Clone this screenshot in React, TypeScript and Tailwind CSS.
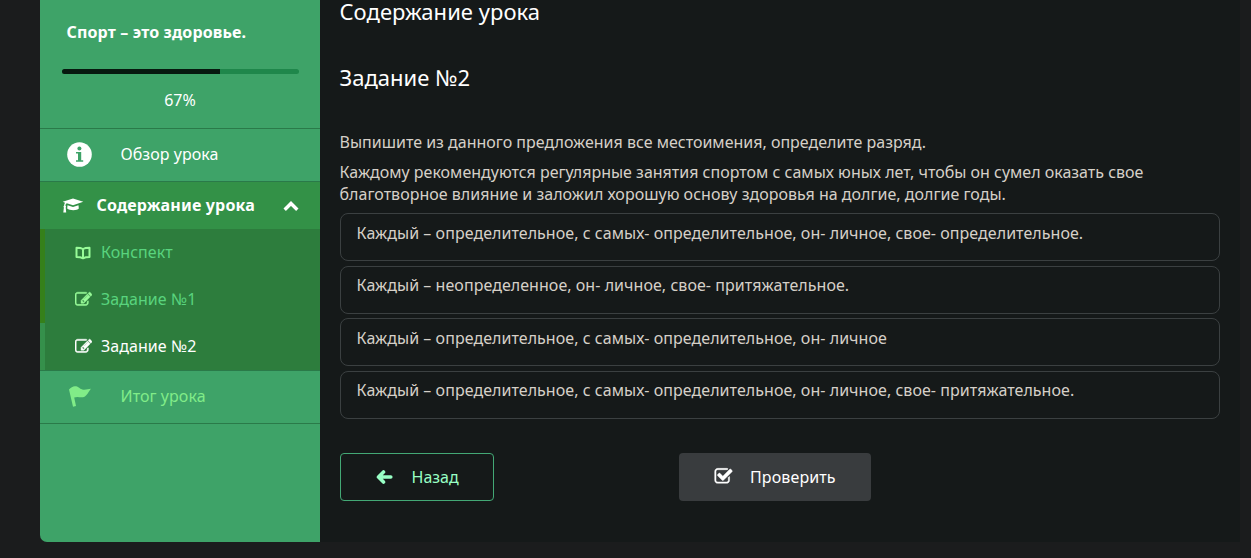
import { useState } from 'react';
import type { ReactNode } from 'react';

const answers = [
  'Каждый – определительное, с самых- определительное, он- личное, свое- определительное.',
  'Каждый – неопределенное, он- личное, свое- притяжательное.',
  'Каждый – определительное, с самых- определительное, он- личное',
  'Каждый – определительное, с самых- определительное, он- личное, свое- притяжательное.',
];

function InfoIcon() {
  return (
    <svg viewBox="0 0 25 25" className="w-[25px] h-[25px]">
      <circle cx="12.5" cy="12.5" r="12.3" fill="currentColor" />
      <circle cx="12.4" cy="6.500" r="2" fill="#3ea368" />
      <path d="M9 10H14.200V18.200H16.200V19.800H9V18.200H11V11.600H9Z" fill="#3ea368" />
    </svg>
  );
}

function CapIcon() {
  return (
    <svg viewBox="0 0 22 17" fill="currentColor" className="w-[22px] h-[17px]">
      <path d="M11 1.500L21.300 4.800L11 8.300L4.800 6.200C3.800 6.800 3.500 7.700 3.500 8.800C4.200 9.300 4.200 10 3.700 10.500L4.200 15.500H1.300L1.900 10.500C1.400 10 1.400 9.200 2.100 8.800C2.100 7.600 2.400 6.500 3 5.700L0.700 4.800Z" />
      <path d="M5.500 8.200L11 10L16.500 8.200L16.800 11.500C15.500 13.700 7.500 13.800 5.200 11.500Z" />
    </svg>
  );
}

function ChevronIcon() {
  return (
    <svg viewBox="0 0 16 12" fill="none" stroke="currentColor" strokeWidth="3.4" className="w-4 h-3">
      <path d="M1.700 9.800L8 3.500L14.300 9.800" />
    </svg>
  );
}

function EditIcon() {
  return (
    <svg viewBox="0 0 1792 1792" fill="currentColor" stroke="currentColor" strokeWidth="50" className="w-[17px] h-[17px]">
      <path d="M888 1184l116-116-152-152-116 116v56h96v96h56zm440-720q-16-16-33 1l-350 350q-17 17-1 33t33-1l350-350q17-17 1-33zm80 594v190q0 119-84.5 203.5t-203.5 84.5h-832q-119 0-203.5-84.5t-84.5-203.5v-832q0-119 84.5-203.5t203.5-84.5h832q63 0 117 25 15 7 18 23 3 17-9 29l-49 49q-14 14-32 8-23-6-45-6h-832q-66 0-113 47t-47 113v832q0 66 47 113t113 47h832q66 0 113-47t47-113v-126q0-13 9-22l64-64q15-15 35-7t20 29zm-96-738l288 288-672 672h-288v-288zm444 132l-92 92-288-288 92-92q28-28 68-28t68 28l152 152q28 28 28 68t-28 68z" />
    </svg>
  );
}

function CheckIcon() {
  return (
    <svg viewBox="0 0 1792 1792" fill="currentColor" stroke="currentColor" strokeWidth="40" className="w-[19px] h-[19px]">
      <path d="M1472 930v318q0 119-84.5 203.5t-203.5 84.5h-832q-119 0-203.5-84.5t-84.5-203.5v-832q0-119 84.5-203.5t203.5-84.5h832q63 0 117 25 15 7 18 23 3 17-9 29l-49 49q-10 10-23 10-3 0-9-2-23-6-45-6h-832q-66 0-113 47t-47 113v832q0 66 47 113t113 47h832q66 0 113-47t47-113v-254q0-13 9-22l64-64q10-10 23-10 6 0 12 3 20 8 20 29zm231-489l-814 814q-24 24-57 24t-57-24l-430-430q-24-24-24-57t24-57l110-110q24-24 57-24t57 24l263 263 647-647q24-24 57-24t57 24l110 110q24 24 24 57t-24 57z" />
    </svg>
  );
}

function BookIcon() {
  return (
    <svg viewBox="0 0 16 14" fill="none" stroke="currentColor" strokeWidth="2" strokeLinejoin="round" className="w-4 h-3.5">
      <path d="M8 3C6 1.700 4 1.700 1.500 1.700V11C4 11 6 11.200 8 12.300C10 11.200 12 11 14.500 11V1.700C12 1.700 10 1.700 8 3V12.300" />
    </svg>
  );
}

function FlagIcon() {
  return (
    <svg viewBox="0 0 24 24" fill="currentColor" className="w-6 h-6">
      <path d="M1 5.500C3 3.200 5.500 1.800 8 2.300C11 3 12 5.400 15.500 5.700C18.500 5.800 20.500 5.200 23 4.800C20.500 7.400 19.500 11.400 16 12.900C12.500 14.200 10 11.800 6.200 13.600L8 22L5 22.800Z" />
    </svg>
  );
}

function ArrowIcon() {
  return (
    <svg viewBox="0 0 17 14" fill="none" stroke="currentColor" strokeWidth="3.6" strokeLinecap="round" strokeLinejoin="round" className="w-[17px] h-3.5">
      <path d="M7.500 2L2.500 7L7.500 12M3 7H14.800" />
    </svg>
  );
}

interface LessonLinkProps {
  icon: ReactNode;
  label: string;
  active?: boolean;
}

function LessonLink({ icon, label, active }: LessonLinkProps) {
  return (
    <a
      href="#"
      className={`flex h-[47px] items-center border-l-[5px] pb-0.5 pl-[30px] tracking-[0.05px] ${active ? 'border-[#35904b] text-white' : 'border-[#35801a] text-[#59d47e]'}`}
    >
      <span className={`flex w-[26px] pt-0.5 ${active ? 'text-white' : 'text-[#98fb98]'}`}>{icon}</span>
      {label}
    </a>
  );
}

function Sidebar() {
  const progress = 67;

  return (
    <aside className="flex h-[542px] w-[280px] shrink-0 flex-col rounded-bl-[7px] bg-[#3ea368] text-white">
      <div className="h-[128px] px-[21.5px] pt-5">
        <h2 className="pl-[5px] text-base leading-6 font-bold tracking-[0.150px]">Спорт – это здоровье.</h2>
        <div className="mt-[25px] h-[5px] overflow-hidden rounded-full bg-[#1f874b]">
          <div className="h-full bg-[#07190f]" style={{ width: `${progress}%` }} />
        </div>
        <p className="mt-[14px] text-center leading-6">{progress}%</p>
      </div>
      <a href="#" className="flex h-[53px] items-center border-t border-[#2a7a49] pb-px pl-[27px]">
        <InfoIcon />
        <span className="pb-px pl-[28.5px] tracking-[0.060px]">Обзор урока</span>
      </a>
      <div className="flex h-12 items-center border-t border-[#2a7a49] bg-[#339147] pl-[22px] font-bold">
        <CapIcon />
        <span className="pb-0.5 pl-[12.5px] tracking-[0.180px]">Содержание урока</span>
        <span className="mr-[21px] ml-auto pt-px">
          <ChevronIcon />
        </span>
      </div>
      <nav className="bg-[#2d7d3d]">
        <LessonLink icon={<BookIcon />} label="Конспект" />
        <LessonLink icon={<EditIcon />} label="Задание №1" />
        <LessonLink icon={<EditIcon />} label="Задание №2" active />
      </nav>
      <a href="#" className="flex h-[54px] items-center border-y border-[#2a7a49] pb-0.5 pl-7 text-[#81ec88]">
        <FlagIcon />
        <span className="pl-[28.5px] tracking-[0.060px]">Итог урока</span>
      </a>
    </aside>
  );
}

export default function App() {
  const [selected, setSelected] = useState<number | null>(null);

  return (
    <div className="flex h-[558px] items-start overflow-hidden bg-[#1b1c1d] pl-10 font-['Noto_Sans',sans-serif] text-base">
      <Sidebar />
      <main className="h-[542px] w-[920px] bg-[#151919] pr-5 pl-[19.5px] text-[#d5d0c8]">
        <h1 className="text-[22px] leading-[22px] tracking-[0.040px] text-white">Содержание урока</h1>
        <h2 className="mt-[39px] text-[22px] leading-8 text-white">Задание №2</h2>
        <p className="mt-[38px] leading-[22px]">Выпишите из данного предложения все местоимения, определите разряд.</p>
        <p className="mt-2 leading-[22px]">
          Каждому рекомендуются регулярные занятия спортом с самых юных лет, чтобы он сумел оказать свое
          <br />
          <span className="tracking-[0.020px]">благотворное влияние и заложил хорошую основу здоровья на долгие, долгие годы.</span>
        </p>
        <div className="mt-2 ml-[0.5px] flex flex-col gap-[4.600px]">
          {answers.map((answer, i) => (
            <button
              key={i}
              onClick={() => setSelected(i)}
              className={`h-12 rounded-lg border pr-4 pb-[9px] pl-[15.5px] text-left tracking-[0.050px] ${selected === i ? 'border-[#3ea368]' : 'border-[#3b4041]'}`}
            >
              {answer}
            </button>
          ))}
        </div>
        <div className="mt-[34px] ml-[0.5px] flex">
          <button className="flex h-12 w-[154px] items-center rounded-[4px] border border-[#43a875] pl-[35px] text-[#98ffc5]">
            <ArrowIcon />
            <span className="pl-[18.5px]">Назад</span>
          </button>
          <button className="ml-[185px] flex h-12 w-48 items-center rounded-[4px] bg-[#393c3e] pl-[35px] text-white">
            <CheckIcon />
            <span className="pl-[17px] tracking-[0.120px]">Проверить</span>
          </button>
        </div>
      </main>
    </div>
  );
}
